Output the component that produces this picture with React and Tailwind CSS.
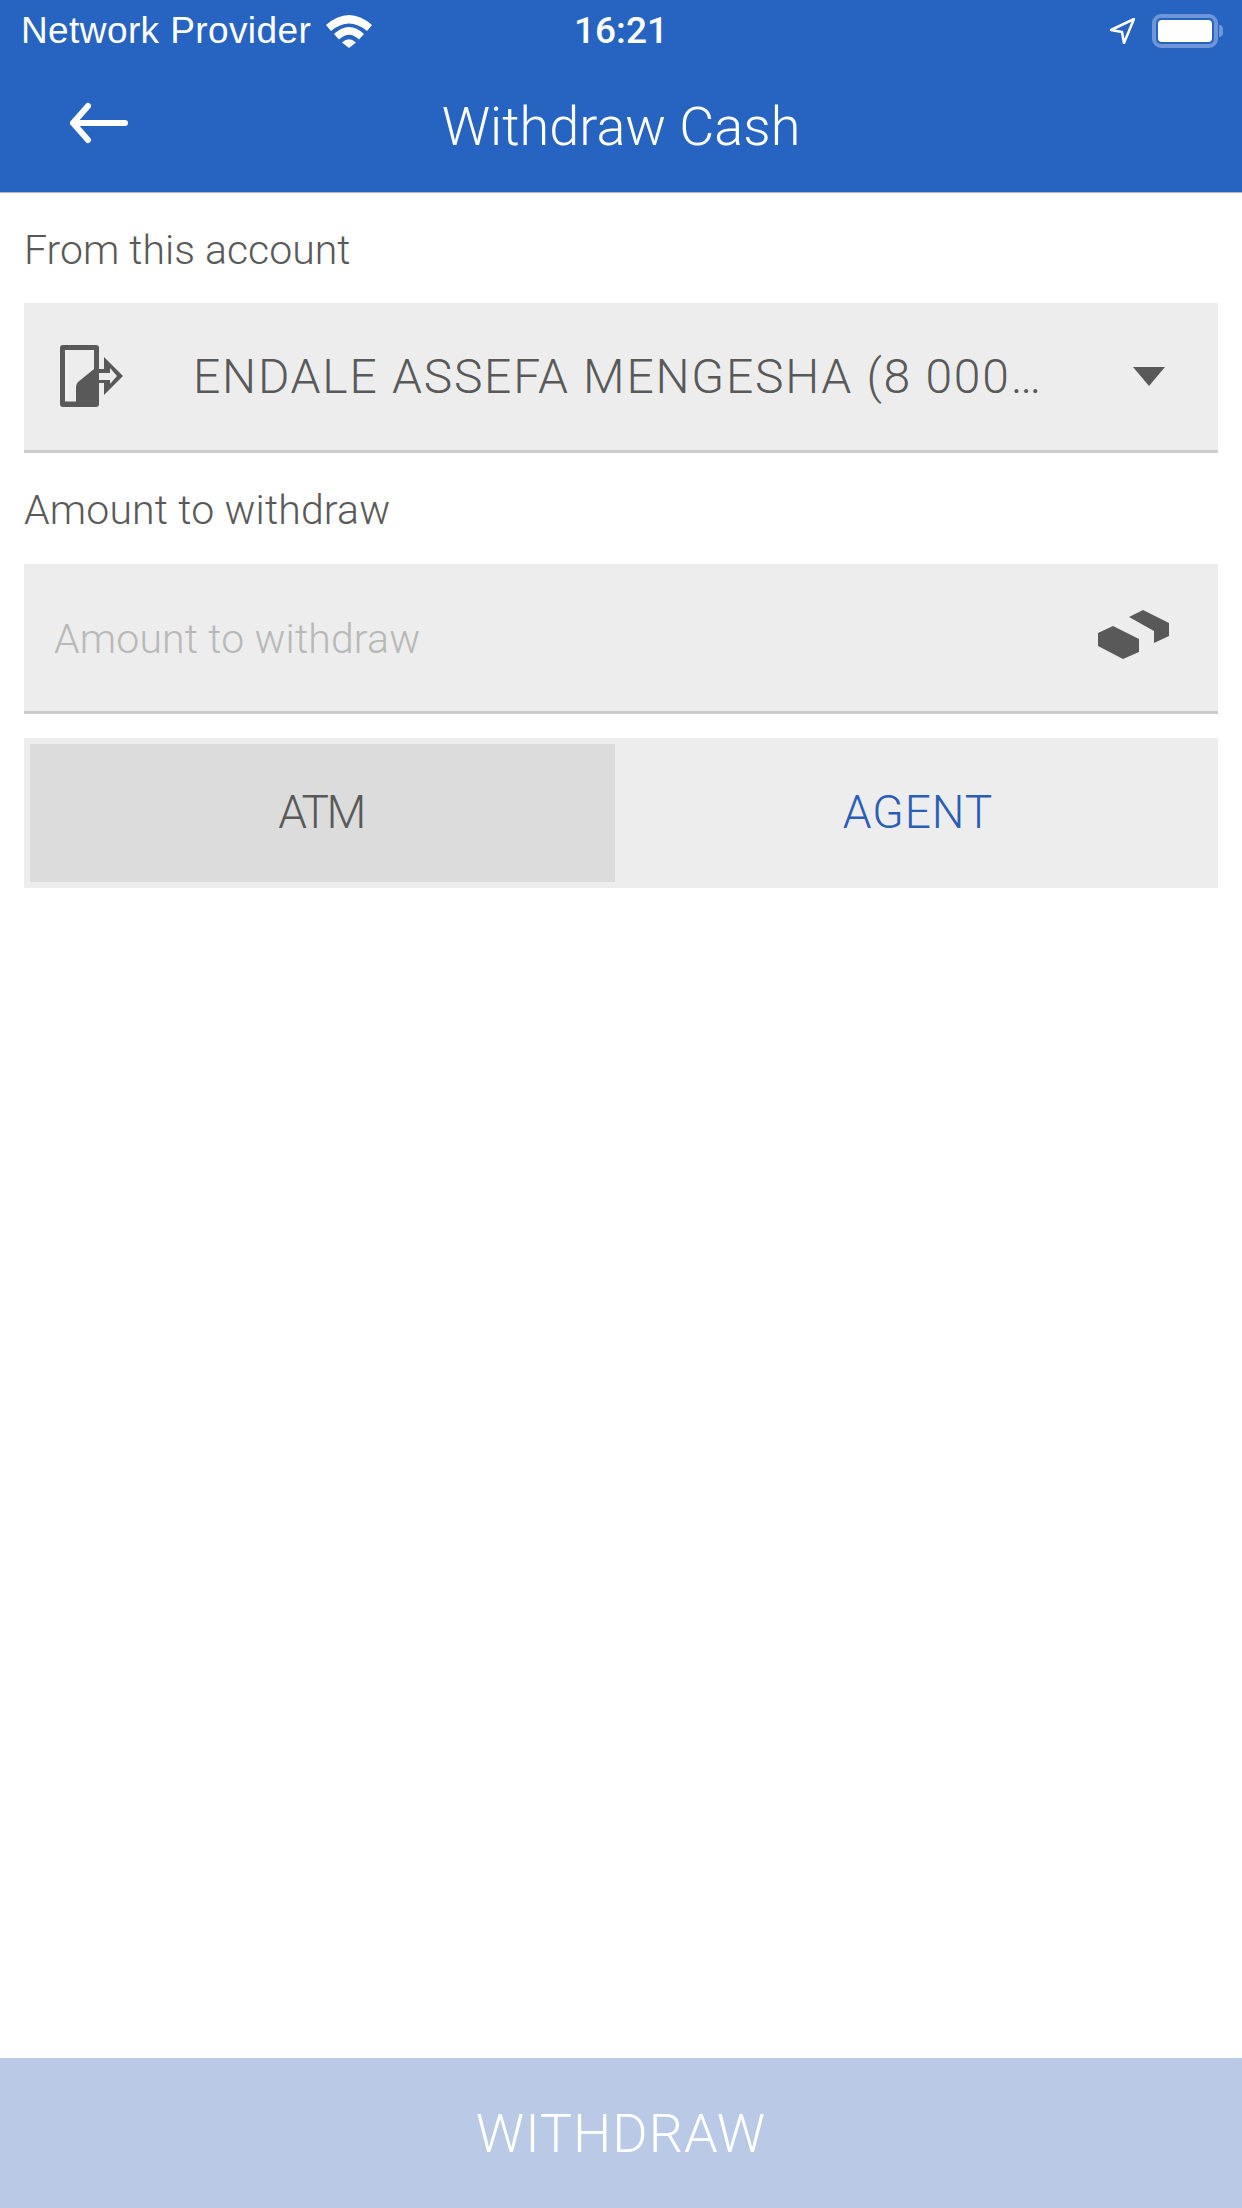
import React from "react";

const FONT = "font-['Roboto','Liberation_Sans',sans-serif]";

function Wifi() {
  return (
    <svg width="46" height="34" viewBox="0 0 46 34" fill="#fff">
      <path d="M0 11 Q23 -9 46 11 L41 17 Q23 2 5 17 Z" />
      <path d="M8 20 Q23 6 38 20 L33 25.500 Q23 16 13 25.500 Z" />
      <path d="M16 28.500 Q23 22 30 28.500 L23 34 Z" />
    </svg>
  );
}

function Battery() {
  return (
    <div className="flex items-center">
      <div className="w-[66px] h-[34px] rounded-[9px] border-[4px] border-[#6e95d8] p-[2px]">
        <div className="w-full h-full rounded-[4px] bg-white" />
      </div>
      <div className="w-[4px] h-[12px] ml-[1px] rounded-r-full bg-[#6e95d8]" />
    </div>
  );
}

function AccountIcon() {
  return (
    <svg width="64" height="63" viewBox="60 344 64 63" fill="#595959">
      <path
        fillRule="evenodd"
        d="M63 344 H96 Q99 344 99 347 V403 Q99 406 96 406 H63 Q60 406 60 403 V347 Q60 344 63 344 Z M65 349 V400.500 H76 V386 Q76 383 78 381 L94 368 V349 Z"
      />
      <path
        fillRule="evenodd"
        d="M99 368 H104 V356 L123 375 L104 394 V382 H99 V379 H110 V383 L117 375 L110 367 V372 H99 Z"
      />
    </svg>
  );
}

function MoneyIcon() {
  return (
    <svg className="mb-[5px]" width="72" height="50" viewBox="1098 610 72 50" fill="#595959">
      <path d="M1098 633 L1113 626 L1139 639 V652 L1123 659 L1098 646 Z" />
      <path d="M1129 617 L1143 610 L1169 623 V636 L1154 643 V631 Z" />
    </svg>
  );
}

function App() {
  return (
    <div className={`${FONT} flex flex-col h-[2208px] bg-white text-[#595959]`}>
      {/* 상단 바 */}
      <div className="h-[193px] bg-[#2763c1] border-b border-[#b5b5b5] text-white">
        <div className="relative flex items-center justify-between h-[60px] pl-[21px] pr-[14px] pt-[2px]">
          <div className="flex items-center gap-[15px]">
            <span className="text-[37px] font-['Liberation_Sans'] tracking-[0.4px]">Network Provider</span>
            <Wifi />
          </div>
          <span className="absolute left-0 right-0 text-center text-[37px] font-medium">16:21</span>
          <div className="flex items-center gap-[17px] mr-[5px]">
            <svg width="26" height="26" viewBox="0 0 26 26" fill="none" stroke="#fff" strokeWidth="2.500" strokeLinejoin="round">
              <path d="M25 1 L2 12 L13 14 L15 25 Z" />
            </svg>
            <Battery />
          </div>
        </div>
        <div className="relative flex items-center justify-center h-[132px]">
          <svg className="absolute left-[68px] top-[42px]" width="62" height="42" viewBox="0 0 62 42" fill="none" stroke="#fff" strokeWidth="6" strokeLinecap="round" strokeLinejoin="round">
            <path d="M57 21 H5 M20 4 L5 21 L20 38" />
          </svg>
          <span className="text-[54px] font-light">Withdraw Cash</span>
        </div>
      </div>

      <div className="px-[24px]">
        <div className="flex items-center h-[110px] pt-[5px] text-[41px] font-light">From this account</div>
        <div className="flex items-center h-[150px] bg-[#ededed] border-b-[3px] border-[#ccc] pl-[36px] pr-[53px]">
          <AccountIcon />
          <span className="ml-[69px] flex-1 text-[48px] font-light tracking-[1.75px] whitespace-nowrap">ENDALE ASSEFA MENGESHA (8 000…</span>
          <div className="w-0 h-0 border-x-[16px] border-x-transparent border-t-[19px] border-t-[#595959]" />
        </div>

        <div className="flex items-center h-[111px] pt-[5px] text-[41px] tracking-[0.15px] font-light">Amount to withdraw</div>
        <div className="flex items-center h-[150px] bg-[#ededed] border-b-[3px] border-[#ccc] pl-[30px] pr-[48px]">
          <input
            placeholder="Amount to withdraw"
            className="flex-1 bg-transparent outline-none pt-[5px] text-[41px] tracking-[0.15px] font-light placeholder:text-[#b8b8b8]"
          />
          <MoneyIcon />
        </div>

        <div className="flex h-[150px] mt-[24px] py-[6px] pl-[6px] bg-[#ededed] font-light">
          <div className="flex items-center justify-center w-[585px] bg-[#dcdcdc] pr-[3px] pb-[2px] text-[46px] tracking-[-2.5px]">ATM</div>
          <div className="flex items-center justify-center flex-1 ml-[3px] pb-[2px] text-[46px] tracking-[1px] text-[#2a5db8]">AGENT</div>
        </div>
      </div>

      <button className="mt-auto h-[150px] bg-[#b9c9e6] text-white text-[54px] tracking-[1px] font-light">WITHDRAW</button>
    </div>
  );
}

export default App;
